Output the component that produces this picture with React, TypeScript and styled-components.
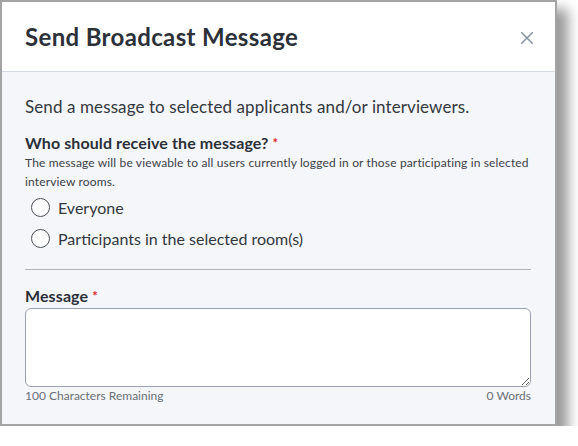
import React from "react";
import styled, { createGlobalStyle } from "styled-components";

const Global = createGlobalStyle`
  html, body { margin: 0; padding: 0; background: #ffffff; }
  body { font-family: Lato, "Open Sans", "Liberation Sans", sans-serif; }
  * { box-sizing: border-box; }
`;

const Frame = styled.div`
  width: 557px;
  border: 2px solid #a4a4a4;
  box-shadow: 9px 11px 12px 2px rgba(0, 0, 0, 0.4);
  background: #f5f6fa;
  display: flex;
  flex-direction: column;
`;

const Header = styled.header`
  height: 70px;
  background: #ffffff;
  border-bottom: 1px solid #d5d9e1;
  display: flex;
  align-items: center;
  justify-content: space-between;
  padding: 0 22px 0 23px;
`;

const Title = styled.h1`
  margin: 0;
  font-size: 24px;
  font-weight: 700;
  color: #2c3038;
  letter-spacing: 0.35px;
  line-height: 28px;
`;

const CloseButton = styled.button`
  border: 0;
  background: transparent;
  padding: 0;
  width: 12px;
  height: 12px;
  display: flex;
  margin-top: 3px;
  cursor: pointer;
`;

const Body = styled.div`
  padding: 24px 24px 20px 23px;
  display: flex;
  flex-direction: column;
  height: 352px;
`;

const Intro = styled.p`
  margin: 0;
  font-size: 17px;
  line-height: 21px;
  letter-spacing: 0.1px;
  color: #333840;
`;

const Label = styled.div<{ $mt: number }>`
  margin-top: ${(p) => p.$mt}px;
  font-size: 16px;
  line-height: 20px;
  font-weight: 700;
  color: #2c3038;
  letter-spacing: 0.1px;
`;

const Required = styled.span`
  color: #e0252b;
  font-size: 13px;
  margin-left: 4px;
  vertical-align: top;
`;

const Hint = styled.p`
  margin: 0;
  font-size: 12px;
  line-height: 19px;
  letter-spacing: 0.15px;
  color: #3c4048;
`;

const RadioList = styled.div`
  margin-top: 3px;
  display: flex;
  flex-direction: column;
  gap: 5px;
  padding-left: 6px;
`;

const RadioRow = styled.label`
  display: flex;
  align-items: center;
  gap: 8px;
  height: 26px;
  font-size: 16px;
  color: #333840;
  cursor: pointer;
`;

const Circle = styled.span`
  width: 19px;
  height: 19px;
  border-radius: 50%;
  border: 1.3px solid #4c4f55;
  background: #ffffff;
  flex: none;
`;

const Divider = styled.hr`
  margin: 18px 0 0 0;
  border: 0;
  border-top: 1px solid #aeb3bc;
  height: 0;
`;

const TextArea = styled.textarea`
  margin-top: 2px;
  width: 100%;
  height: 79px;
  border: 1px solid #9aa2ae;
  border-radius: 6px;
  background: #ffffff;
  resize: vertical;
  font-family: inherit;
  font-size: 14px;
  padding: 6px 8px;
`;

const Footer = styled.div`
  display: flex;
  justify-content: space-between;
  font-size: 12px;
  line-height: 16px;
  color: #6a6e75;
  margin-top: 1px;
`;

const CloseIcon = () => (
  <svg width="12" height="12" viewBox="0 0 12 12" fill="none">
    <path d="M0.7 0.7 L11.3 11.3 M11.3 0.7 L0.7 11.3" stroke="#8792a2" strokeWidth="1.5" strokeLinecap="round" />
  </svg>
);

export default function App() {
  return (
    <>
      <Global />
      <Frame>
        <Header>
          <Title>Send Broadcast Message</Title>
          <CloseButton aria-label="Close">
            <CloseIcon />
          </CloseButton>
        </Header>
        <Body>
          <Intro>Send a message to selected applicants and/or interviewers.</Intro>
          <Label $mt={16}>
            Who should receive the message?<Required>*</Required>
          </Label>
          <Hint>
            The message will be viewable to all users currently logged in or those participating in selected
            interview rooms.
          </Hint>
          <RadioList>
            <RadioRow>
              <Circle />
              Everyone
            </RadioRow>
            <RadioRow>
              <Circle />
              Participants in the selected room(s)
            </RadioRow>
          </RadioList>
          <Divider />
          <Label $mt={16}>
            Message<Required>*</Required>
          </Label>
          <TextArea />
          <Footer>
            <span>100 Characters Remaining</span>
            <span>0 Words</span>
          </Footer>
        </Body>
      </Frame>
    </>
  );
}
